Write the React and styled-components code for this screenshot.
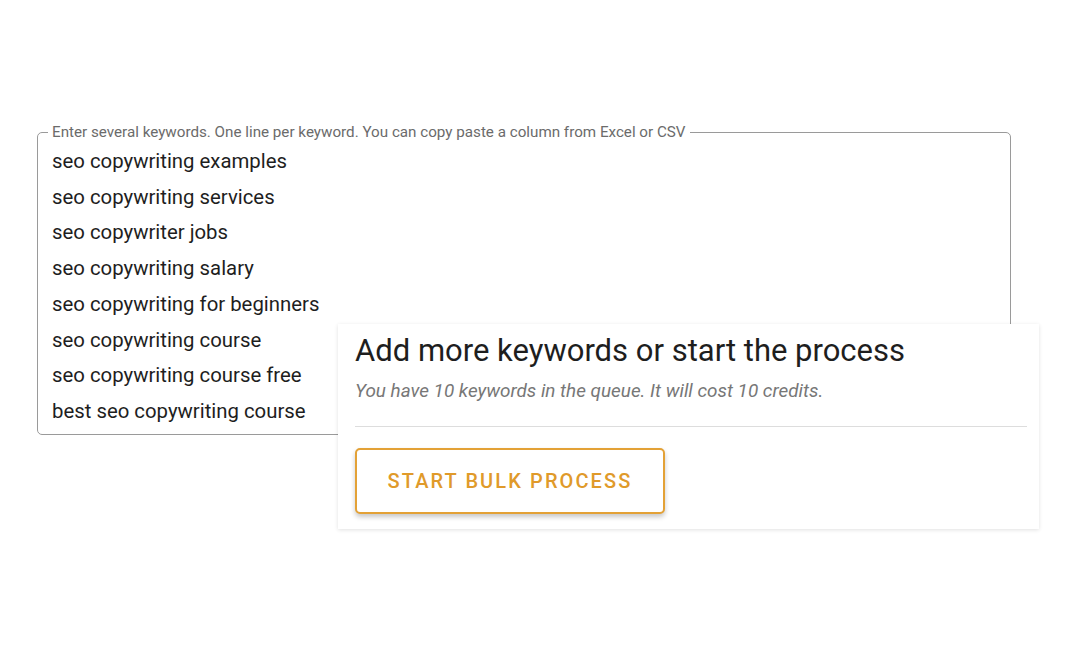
import styled, { createGlobalStyle } from 'styled-components';

const GlobalStyle = createGlobalStyle`
    body {
        margin: 0;
        background: #fff;
        font-family: Roboto, "Liberation Sans", sans-serif;
    }
`;

const Page = styled.div`
    position: relative;
    width: 1080px;
    height: 649px;
    padding: 123px 0 0 37px;
    box-sizing: border-box;
`;

const Field = styled.fieldset`
    width: 974px;
    box-sizing: border-box;
    margin: 0;
    padding: 0 10px 4px 10px;
    border: 1px solid #9a9a9a;
    border-radius: 5px;
`;

const Legend = styled.legend`
    padding: 0 4px;
    font-size: 15.2px;
    line-height: 18px;
    color: #6b6b6b;
`;

const Lines = styled.div`
    padding: 3px 4px 0;
`;

const Line = styled.div`
    font-size: 20.35px;
    line-height: 35.7px;
    color: #1e1e1e;
`;

const Card = styled.div`
    position: absolute;
    left: 338px;
    top: 324px;
    width: 701px;
    box-sizing: border-box;
    padding: 9px 12px 15px 17px;
    background: #fff;
    box-shadow: 0 1px 4px rgba(0, 0, 0, 0.12);
`;

const Title = styled.h2`
    margin: 0;
    font-size: 31px;
    line-height: 36px;
    font-weight: 400;
    color: #1e1e1e;
`;

const Note = styled.p`
    margin: 10px 0 0;
    font-size: 18.9px;
    line-height: 24px;
    font-style: italic;
    color: #777;
`;

const Divider = styled.hr`
    margin: 23px 0 21px;
    border: none;
    border-top: 1px solid #ddd;
`;

const Button = styled.button`
    width: 310px;
    height: 66px;
    background: #fff;
    border: 2px solid #e3a136;
    border-radius: 5px;
    box-shadow: 0 3px 5px rgba(0, 0, 0, 0.22);
    font-family: Roboto, "Liberation Sans", sans-serif;
    font-size: 20px;
    font-weight: 500;
    letter-spacing: 2.1px;
    color: #e09a2a;
    cursor: pointer;
`;

const keywords = [
    'seo copywriting examples',
    'seo copywriting services',
    'seo copywriter jobs',
    'seo copywriting salary',
    'seo copywriting for beginners',
    'seo copywriting course',
    'seo copywriting course free',
    'best seo copywriting course',
];

const App = () => {
    return (
        <Page>
            <GlobalStyle />
            <Field>
                <Legend>Enter several keywords. One line per keyword. You can copy paste a column from Excel or CSV</Legend>
                <Lines>
                    {keywords.map(k => <Line key={k}>{k}</Line>)}
                </Lines>
            </Field>
            <Card>
                <Title>Add more keywords or start the process</Title>
                <Note>You have 10 keywords in the queue. It will cost 10 credits.</Note>
                <Divider />
                <Button>START BULK PROCESS</Button>
            </Card>
        </Page>
    );
};

export default App;
